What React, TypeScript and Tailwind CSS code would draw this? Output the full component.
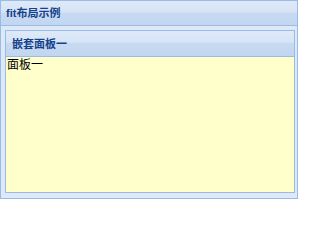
export default function App() {
  return (
    <div className="w-[298px] h-[199px] flex flex-col border border-[#99bbe8] font-['Liberation_Sans','Noto_Sans_CJK_SC',sans-serif]">
      {/* outer panel header */}
      <div className="h-[25px] shrink-0 flex items-center pl-[5px] pt-[1px] border-b border-[#99bbe8] bg-[linear-gradient(to_bottom,#dfeaf8_0%,#d6e4f6_45%,#c8daf2_50%,#c2d6f0_100%)]">
        <span className="text-[11px] font-bold text-[#15428b] leading-none">fit布局示例</span>
      </div>
      {/* outer body */}
      <div className="flex-1 flex flex-col bg-[#dfe8f6] pt-[4px] pl-[4px] pr-[2px] pb-[5px]">
        <div className="flex-1 flex flex-col border border-[#99bbe8]">
          <div className="h-[26px] shrink-0 flex items-center pl-[6px] pt-[1px] border-b border-[#99bbe8] bg-[linear-gradient(to_bottom,#dfeaf8_0%,#d6e4f6_45%,#c8daf2_50%,#c2d6f0_100%)]">
            <span className="text-[11px] font-bold text-[#15428b] leading-none">嵌套面板一</span>
          </div>
          <div className="flex-1 bg-[#ffffcc] text-[12px] leading-[15px] text-black pl-[1px] pt-[1px]">面板一</div>
        </div>
      </div>
    </div>
  );
}
